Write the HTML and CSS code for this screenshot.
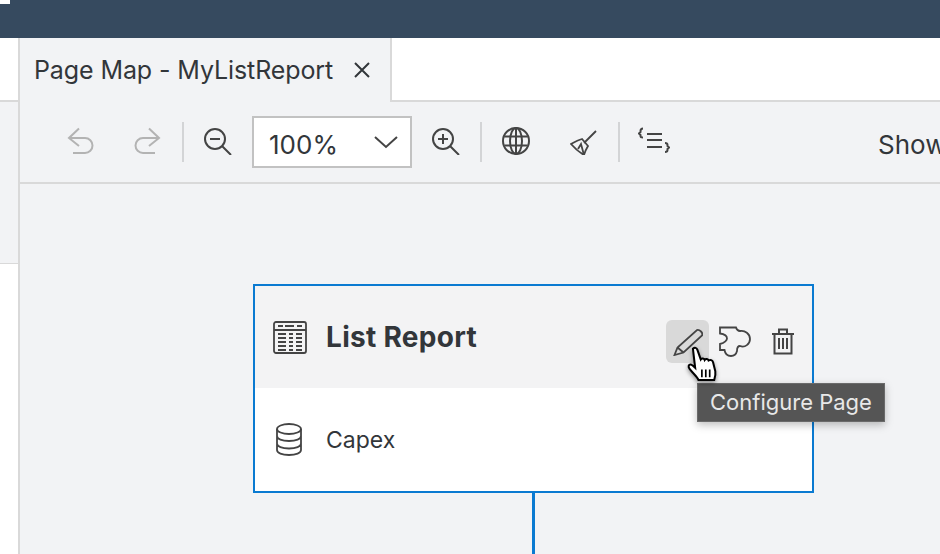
FILE: index.html
```html
<!DOCTYPE html>
<html lang="en">
<head>
  <meta charset="UTF-8">
  <title>Page Map - MyListReport</title>
  <link rel="stylesheet" href="styles.css">
</head>
<body>
  <div class="shell-bar"><span class="shell-mark"></span></div>
  <div class="workspace">
    <div class="side-panel">
      <div class="side-top"></div>
      <div class="side-middle"></div>
      <div class="side-bottom"></div>
    </div>
    <div class="editor">
      <div class="tab-strip">
        <div class="tab">
          <span class="tab-title">Page Map - MyListReport</span>
          <svg class="tab-close" width="16" height="16" viewBox="0 0 16 16"><path d="M1 1 15 15M15 1 1 15"/></svg>
        </div>
      </div>
      <div class="toolbar">
        <span class="tool">
          <svg class="icon off" width="28" height="28" viewBox="0 0 28 28"><path d="M13 1.500 3 11l10 8M3 11h16a7.500 7.500 0 0 1 0 15H7"/></svg>
        </span>
        <span class="tool">
          <svg class="icon off" width="28" height="28" viewBox="0 0 28 28"><path d="M15 1.500 25 11l-10 8M25 11H9a7.500 7.500 0 0 0 0 15h12"/></svg>
        </span>
        <span class="tool-sep"></span>
        <span class="tool">
          <svg class="icon" width="28" height="28" viewBox="0 0 28 28"><circle cx="11" cy="12" r="10"/><path d="m18 19 9 9M6 12h10"/></svg>
        </span>
        <div class="zoom-select">
          <span>100%</span>
          <svg class="icon" width="24" height="13" viewBox="0 0 24 13"><path d="m1 1 11 10L23 1"/></svg>
        </div>
        <span class="tool">
          <svg class="icon" width="28" height="28" viewBox="0 0 28 28"><circle cx="11" cy="12" r="10"/><path d="m18 19 9 9M6 12h10M11 7v10"/></svg>
        </span>
        <span class="tool-sep"></span>
        <span class="tool">
          <svg class="icon" width="28" height="28" viewBox="0 0 28 28"><circle cx="14" cy="14" r="13"/><ellipse cx="14" cy="14" rx="6" ry="13"/><path d="M14 1v26M2.500 9.500h23M2.500 18.500h23"/></svg>
        </span>
        <span class="tool">
          <svg class="icon thin" width="28" height="28" viewBox="0 0 28 28"><path d="M26 4 14 16M1 17q7-4 11-5l6 7q-3 5-4 9-7-4-13-11zM8 22l3-5 3 11"/></svg>
        </span>
        <span class="tool-sep"></span>
        <span class="tool">
          <svg class="icon" width="32" height="28" viewBox="0 0 32 28"><path d="M9 7h15M9 13h15M9 20h15M5 1.500Q2.500 1.500 2.500 4v1L1 6.500 2.500 8v1q0 1.500 2.500 1.500M27 16q2.500 0 2.500 2v1l1.500 1.500-1.500 1.500v1q0 2-2.500 2"/></svg>
        </span>
        <span class="show-label">Show</span>
      </div>
      <div class="canvas">
        <div class="page-card">
          <div class="card-head">
            <svg class="icon thin card-icon" width="34" height="33" viewBox="0 0 34 33"><rect x="1" y="1" width="32" height="31" rx="2"/><path d="M1 9h32M5 5h5M12 5h9M24 5h5M5 13h8M16 13h4M23 13h6M5 17h8M16 17h4M23 17h6M5 21h8M16 21h4M23 21h6M5 25h8M16 25h4M23 25h6M5 29h8M16 29h4M23 29h6"/></svg>
            <span class="card-title">List Report</span>
            <div class="card-actions">
              <span class="action action-hover">
                <svg class="icon thin" width="30" height="28" viewBox="0 0 30 28"><path d="M1.500 27 4.500 19.500 24 2q2-.5 4 1.500t1 4L10.500 24.500zM4.500 19.500l6 5"/></svg>
              </span>
              <span class="action">
                <svg class="icon thin" width="33" height="31" viewBox="0 0 33 31"><path d="M1 1.500H17Q18 5 21 5C26 4 31 8 31 13 31 18 26 22 21 20 18 20 18 23 18 25 17 29 14 30 12 30 8 30 6 27 5.500 24H1V18C6 17 8 14 8 12.500 8 10 5 8 1 7.500Z"/></svg>
              </span>
              <span class="action">
                <svg class="icon" width="23" height="27" viewBox="0 0 23 27"><path d="M0 6h22M7 6V1.500h8V6M2.500 6v19.500h17V6M7 10v11M11 10v11M15 10v11"/></svg>
              </span>
            </div>
          </div>
          <div class="card-body">
            <svg class="icon thin card-icon data-icon" width="26" height="33" viewBox="0 0 26 33"><ellipse cx="13" cy="6" rx="12" ry="5"/><path d="M1 6v21c0 3 5 5 12 5s12-2 12-5V6M1 13c0 3 5 5 12 5s12-2 12-5M1 20.500c0 3 5 5 12 5s12-2 12-5"/></svg>
            <span class="card-entity">Capex</span>
          </div>
        </div>
        <div class="card-link"></div>
        <div class="tooltip">Configure Page</div>
        <svg class="hand" width="36" height="38" viewBox="0 0 32 34"><path d="M7 2.500c1.500-1.500 3.500-1 4 1L14 12c1-1.500 3-1 3.500.5 1-1.500 3-1 3.500.5 1.500-1 3.500-.5 4 1.500l2 8c.5 3 0 5-1 8H12c-1-3-5-6-8-10-1.500-2-1-4 1-4 1 0 2 1 4 3z"/><path class="hand-lines" d="M15 21v7M18.500 21v7M22 21v7"/></svg>
      </div>
    </div>
  </div>
</body>
</html>
```

FILE: styles.css
```css
html, body {
  height: 100%;
}

body {
  margin: 0;
  display: flex;
  flex-direction: column;
  overflow: hidden;
  font-family: Inter, "Open Sans", Arial, sans-serif;
  color: #32363a;
  background: #fff;
}

.shell-bar {
  height: 38px;
  flex: none;
  background: #364a5f;
}

.shell-mark {
  display: block;
  width: 10px;
  height: 4px;
  background: #fff;
}

.workspace {
  flex: 1;
  display: flex;
  min-height: 0;
}

.side-panel {
  width: 18px;
  flex: none;
  display: flex;
  flex-direction: column;
}

.side-top {
  height: 62px;
  border-bottom: 2px solid #d9d9d9;
}

.side-middle {
  height: 161px;
  background: #f2f3f5;
  border-bottom: 1px solid #d9d9d9;
}

.side-bottom {
  flex: 1;
}

.editor {
  flex: 1;
  min-width: 0;
  display: flex;
  flex-direction: column;
  border-left: 2px solid #d9d9d9;
}

.tab-strip {
  height: 62px;
  flex: none;
  display: flex;
  border-bottom: 2px solid #d9d9d9;
}

.tab {
  width: 372px;
  height: 64px;
  box-sizing: border-box;
  display: flex;
  align-items: center;
  padding: 0 20px 0 14px;
  background: #f2f3f5;
  border-right: 2px solid #d9d9d9;
}

.tab-title {
  font-size: 25px;
  letter-spacing: -0.1px;
  white-space: nowrap;
}

.tab-close {
  margin-left: auto;
  fill: none;
  stroke: #32363a;
  stroke-width: 2;
}

.toolbar {
  height: 82px;
  flex: none;
  display: flex;
  align-items: center;
  padding-left: 26px;
  background: #f2f3f5;
  border-bottom: 2px solid #d9d9d9;
  box-sizing: border-box;
  white-space: nowrap;
}

.tool {
  width: 68px;
  flex: none;
  display: flex;
  justify-content: center;
  margin-bottom: 2px;
}

.tool-sep {
  width: 2px;
  height: 40px;
  flex: none;
  background: #d3d4d6;
}

.icon {
  fill: none;
  stroke: #444;
  stroke-width: 2;
}

.icon.off {
  stroke: #b3b3b3;
}

.icon.thin {
  stroke-width: 1.800;
}

.zoom-select {
  width: 160px;
  height: 52px;
  flex: none;
  box-sizing: border-box;
  display: flex;
  align-items: center;
  justify-content: space-between;
  padding: 0 12px 0 15px;
  background: #fff;
  border: 2px solid #c2c2c2;
  font-size: 26px;
}

.zoom-select span {
  padding-top: 4px;
}

.show-label {
  margin-left: 190px;
  padding-top: 4px;
  font-size: 26px;
}

.canvas {
  flex: 1;
  position: relative;
  background: #f2f3f5;
  padding: 100px 0 0 233px;
}

.page-card {
  width: 561px;
  height: 209px;
  box-sizing: border-box;
  border: 2px solid #0a7ad1;
  background: #fff;
  display: flex;
  flex-direction: column;
}

.card-head {
  height: 102px;
  flex: none;
  display: flex;
  align-items: center;
  padding: 0 7px 0 18px;
  background: #f3f3f4;
}

.card-icon {
  flex: none;
  margin-right: 19px;
}

.card-title {
  font-size: 28px;
  font-weight: 700;
  letter-spacing: 0.3px;
}

.card-actions {
  margin-left: auto;
  margin-top: 9px;
  display: flex;
  align-items: center;
  gap: 5px;
}

.action {
  width: 43px;
  height: 43px;
  display: flex;
  align-items: center;
  justify-content: center;
  border-radius: 6px;
}

.action-hover {
  background: #d9d9d9;
}

.card-body {
  flex: 1;
  display: flex;
  align-items: center;
  padding-left: 21px;
}

.data-icon {
  margin-right: 24px;
}

.card-entity {
  font-size: 23px;
}

.card-link {
  width: 3px;
  height: 70px;
  margin-left: 279px;
  background: #0a7ad1;
}

.tooltip {
  position: absolute;
  left: 677px;
  top: 199px;
  width: 188px;
  height: 39px;
  box-sizing: border-box;
  display: flex;
  align-items: center;
  justify-content: center;
  padding-bottom: 2px;
  background: #555;
  border: 1px solid #6a6a6a;
  color: #e8e8e8;
  font-size: 22px;
  white-space: nowrap;
  box-shadow: 0 3px 8px rgba(0, 0, 0, 0.25);
}

.hand {
  position: absolute;
  left: 665px;
  top: 162px;
  fill: #fff;
  stroke: #000;
  stroke-width: 1.800;
  filter: drop-shadow(0 2px 2px rgba(0, 0, 0, 0.4));
}

.hand-lines {
  fill: none;
  stroke-width: 1.500;
}
```
